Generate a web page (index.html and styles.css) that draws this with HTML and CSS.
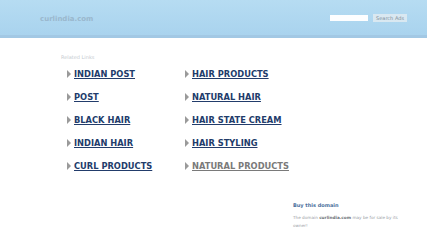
FILE: index.html
```html
<!DOCTYPE html>
<html lang="en">

<head>
    <meta charset="UTF-8">
    <meta name="viewport" content="width=device-width, initial-scale=1.0">
    <title>curlindia.com</title>
    <link rel="stylesheet" href="styles.css">
</head>

<body>
    <header class="top">
        <div class="logo">curlindia.com</div>
        <form class="search">
            <input type="text" class="search-box">
            <button type="button" class="search-btn">Search Ads</button>
        </form>
    </header>

    <main class="content">
        <div class="related-title">Related Links</div>
        <ul class="links">
            <li><a href="#">INDIAN POST</a></li>
            <li><a href="#">HAIR PRODUCTS</a></li>
            <li><a href="#">POST</a></li>
            <li><a href="#">NATURAL HAIR</a></li>
            <li><a href="#">BLACK HAIR</a></li>
            <li><a href="#">HAIR STATE CREAM</a></li>
            <li><a href="#">INDIAN HAIR</a></li>
            <li><a href="#">HAIR STYLING</a></li>
            <li><a href="#">CURL PRODUCTS</a></li>
            <li><a href="#" class="visited">NATURAL PRODUCTS</a></li>
        </ul>

        <div class="sale">
            <a href="#" class="buy">Buy this domain</a>
            <p>The domain <b>curlindia.com</b> may be for sale by its<br>owner!</p>
        </div>
    </main>
</body>

</html>
```

FILE: styles.css
```css
body {
    margin: 0;
    padding: 0;
    background: #ffffff;
    font-family: 'DejaVu Sans', sans-serif;
}

.top {
    width: 427px;
    height: 35px;
    background: linear-gradient(180deg, #b6dcf2, #a9d3ee);
    border-bottom: 3px solid #a2c8e4;
    display: flex;
    align-items: center;
    justify-content: space-between;
}

.logo {
    margin-left: 40px;
    margin-top: 2px;
    font-size: 7px;
    font-weight: bold;
    color: #9ab7cd;
}

.search {
    display: flex;
    align-items: center;
    gap: 5px;
    margin-right: 20px;
    margin-top: 1px;
}

.search-box {
    width: 38px;
    height: 6px;
    padding: 0;
    border: none;
    background: #fdfeff;
}

.search-btn {
    height: 8px;
    padding: 0 3px;
    border: none;
    background: #d9e8f1;
    color: #7d8d99;
    font-family: 'DejaVu Sans', sans-serif;
    font-size: 5px;
    line-height: 8px;
}

.content {
    padding: 16px 0 0 61px;
}

.related-title {
    font-size: 5px;
    color: #c6cbd0;
}

.links {
    list-style: none;
    margin: 8px 0 0 6px;
    padding: 0;
    display: grid;
    grid-template-columns: 118px 150px;
    row-gap: 11px;
}

.links li {
    display: flex;
    align-items: center;
    height: 12px;
}

.links li::before {
    content: '';
    width: 0;
    height: 0;
    border-top: 4px solid transparent;
    border-bottom: 4px solid transparent;
    border-left: 4px solid #9a9a9a;
    margin-right: 3px;
}

.links a {
    font-size: 8.3px;
    font-weight: bold;
    color: #223c6b;
    text-decoration: underline;
}

.links a.visited {
    color: #7a7a7a;
}

.sale {
    width: 120px;
    margin: 20px 0 0 232px;
}

.buy {
    font-size: 5px;
    font-weight: bold;
    color: #4a6f9c;
    text-decoration: none;
}

.sale p {
    margin: 3px 0 0;
    font-size: 4.2px;
    line-height: 8px;
    color: #9aa0a6;
}

.sale p b {
    color: #6d7277;
}
```
